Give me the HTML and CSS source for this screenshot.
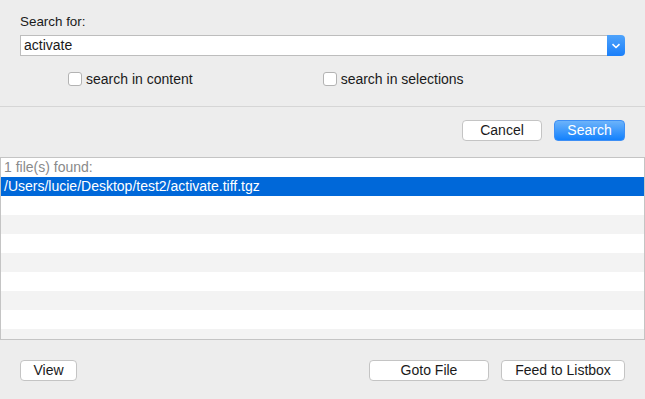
FILE: index.html
```html
<!DOCTYPE html>
<html>
<head>
<meta charset="utf-8">
<link rel="stylesheet" href="styles.css">
</head>
<body>
<div class="top">
  <div class="label">Search for:</div>
  <div class="combo">
    <div class="combo-field">activate</div>
    <div class="combo-btn">
      <svg width="10" height="6" viewBox="0 0 10 6"><path d="M1.5 1.2 L5 4.5 L8.5 1.2" fill="none" stroke="#fff" stroke-width="1.6"/></svg>
    </div>
  </div>
  <div class="checks">
    <label class="check"><span class="box"></span>search in content</label>
    <label class="check"><span class="box"></span>search in selections</label>
  </div>
</div>
<div class="sep"></div>
<div class="actions">
  <button class="btn cancel">Cancel</button>
  <button class="btn primary">Search</button>
</div>
<div class="list">
  <div class="row header">1 file(s) found:</div>
  <div class="row selected">/Users/lucie/Desktop/test2/activate.tiff.tgz</div>
</div>
<div class="footer">
  <button class="btn view">View</button>
  <div class="spacer"></div>
  <button class="btn goto">Goto File</button>
  <button class="btn feed">Feed to Listbox</button>
</div>
</body>
</html>
```
FILE: styles.css
```css
html, body {
  margin: 0;
  padding: 0;
  background: #ededed;
  font-family: "Liberation Sans", Arial, sans-serif;
  font-size: 14px;
  color: #1a1a1a;
  width: 645px;
  height: 399px;
  overflow: hidden;
}
.top {
  padding: 14px 20px 0 20px;
}
.label {
  font-size: 13.4px;
  line-height: 16px;
  height: 16px;
  margin-bottom: 5px;
}
.combo {
  display: flex;
  height: 21px;
}
.combo-field {
  flex: 1;
  box-sizing: border-box;
  height: 21px;
  background: #fff;
  border: 1px solid #bdbdbd;
  border-right: none;
  padding-left: 3px;
  line-height: 19px;
}
.combo-btn {
  width: 18px;
  height: 21px;
  background: linear-gradient(#4fa3fb, #1a7ffa);
  border-radius: 0 4px 4px 0;
  display: flex;
  align-items: center;
  justify-content: center;
}
.checks {
  display: flex;
  margin-top: 14px;
  padding-left: 48px;
  height: 18px;
}
.check {
  display: flex;
  align-items: center;
  line-height: 18px;
}
.check + .check {
  margin-left: 130px;
}
.box {
  width: 12px;
  height: 12px;
  background: #fff;
  border: 1px solid #b3b3b3;
  border-radius: 3px;
  margin-right: 4px;
}
.sep {
  margin-top: 18px;
  height: 1px;
  background: #d6d6d6;
}
.actions {
  display: flex;
  justify-content: flex-end;
  gap: 12px;
  padding: 13px 20px 0 0;
  height: 21px;
}
.btn {
  box-sizing: border-box;
  height: 21px;
  font-family: "Liberation Sans", Arial, sans-serif;
  font-size: 14px;
  color: #1a1a1a;
  background: #fff;
  border: 1px solid #c4c4c4;
  border-radius: 4px;
  padding: 0;
  margin: 0;
  line-height: 19px;
}
.cancel { width: 80px; }
.primary {
  width: 71px;
  color: #fff;
  border: 1px solid #3d8ff5;
  background: linear-gradient(#6cb3fa, #1381fd);
}
.list {
  margin-top: 16px;
  box-sizing: border-box;
  height: 183px;
  border: 1px solid #c4c4c4;
  background: repeating-linear-gradient(#fff 0, #fff 19px, #f3f3f3 19px, #f3f3f3 38px);
}
.row {
  height: 19px;
  line-height: 19px;
  padding-left: 3px;
  white-space: nowrap;
}
.header { color: #8a8a8a; }
.selected {
  background: #0068d9;
  color: #fff;
}
.footer {
  display: flex;
  padding: 20px 20px 0 20px;
}
.spacer { flex: 1; }
.view { width: 57px; }
.goto { width: 120px; margin-right: 12px; }
.feed { width: 124px; }
```
